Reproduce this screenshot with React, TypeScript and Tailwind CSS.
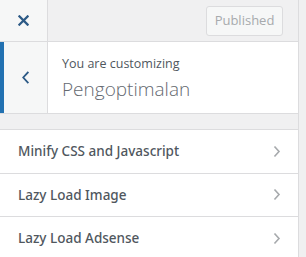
import React from 'react';

const sections = ['Minify CSS and Javascript', 'Lazy Load Image', 'Lazy Load Adsense'];

const Chevron: React.FC<{ dir: 'left' | 'right'; className?: string }> = ({ dir, className }) => (
  <svg className={className} viewBox="0 0 10 16" fill="none" stroke="currentColor" strokeWidth={2} strokeLinecap="square">
    {dir === 'left' ? <path d="M7.5 2.5L2.5 8l5 5.5" /> : <path d="M2.5 2.5L7.5 8l-5 5.5" />}
  </svg>
);

export default function App() {
  return (
    <div className="flex w-[306px] h-[257px] bg-[#f0f0f1] overflow-hidden" style={{ fontFamily: '"Open Sans", "Noto Sans", sans-serif' }}>
      <div className="w-[299px] shrink-0 flex flex-col border-r border-[#dcdcde]">
        {/* header */}
        <div className="shrink-0 flex h-[42px] border-b border-[#dcdcde] bg-[#f0f0f1]">
          <button className="w-[48px] flex items-center justify-center bg-[#f6f7f7] border-r border-[#dcdcde] text-[#2c5a86]">
            <svg className="w-[11px] h-[11px]" viewBox="0 0 12 12" stroke="currentColor" strokeWidth={2.4} strokeLinecap="square">
              <path d="M1.5 1.5l9 9M10.5 1.5l-9 9" />
            </svg>
          </button>
          <div className="flex-1 flex items-center justify-end pr-[15px]">
            <div className="h-[30px] w-[77px] flex items-center justify-center rounded-[3px] border border-[#dcdcde] bg-[#f6f7f7] text-[13px] text-[#a7aaad]">
              Published
            </div>
          </div>
        </div>

        {/* info */}
        <div className="shrink-0 flex h-[72px] bg-white border-b border-[#dcdcde]">
          <div className="w-[48px] flex items-center justify-center bg-[#f6f7f7] border-l-4 border-[#2271b1] border-r border-r-[#dcdcde] text-[#2c5a86]">
            <Chevron dir="left" className="w-[9px] h-[15px]" />
          </div>
          <div className="flex flex-col justify-center pl-[14px] pt-[2px]">
            <div className="text-[12.5px] leading-[16px] text-[#50575e]">You are customizing</div>
            <div className="text-[19px] leading-[26px] font-light text-[#646970] mt-[4px]">Pengoptimalan</div>
          </div>
        </div>

        <div className="shrink-0 h-[15px]" />

        {/* sections */}
        <div className="bg-white border-t border-[#dcdcde] flex-1">
          {sections.map((s) => (
            <div key={s} className="flex items-center justify-between h-[43.5px] border-b border-[#dcdcde] pl-[18px] pr-[17px]">
              <span className="text-[13.5px] font-medium text-[#50575e]" style={{ fontFamily: '"Noto Sans", "Open Sans", sans-serif' }}>{s}</span>
              <Chevron dir="right" className="w-[8px] h-[13px] text-[#a7aaad]" />
            </div>
          ))}
        </div>
      </div>
    </div>
  );
}
